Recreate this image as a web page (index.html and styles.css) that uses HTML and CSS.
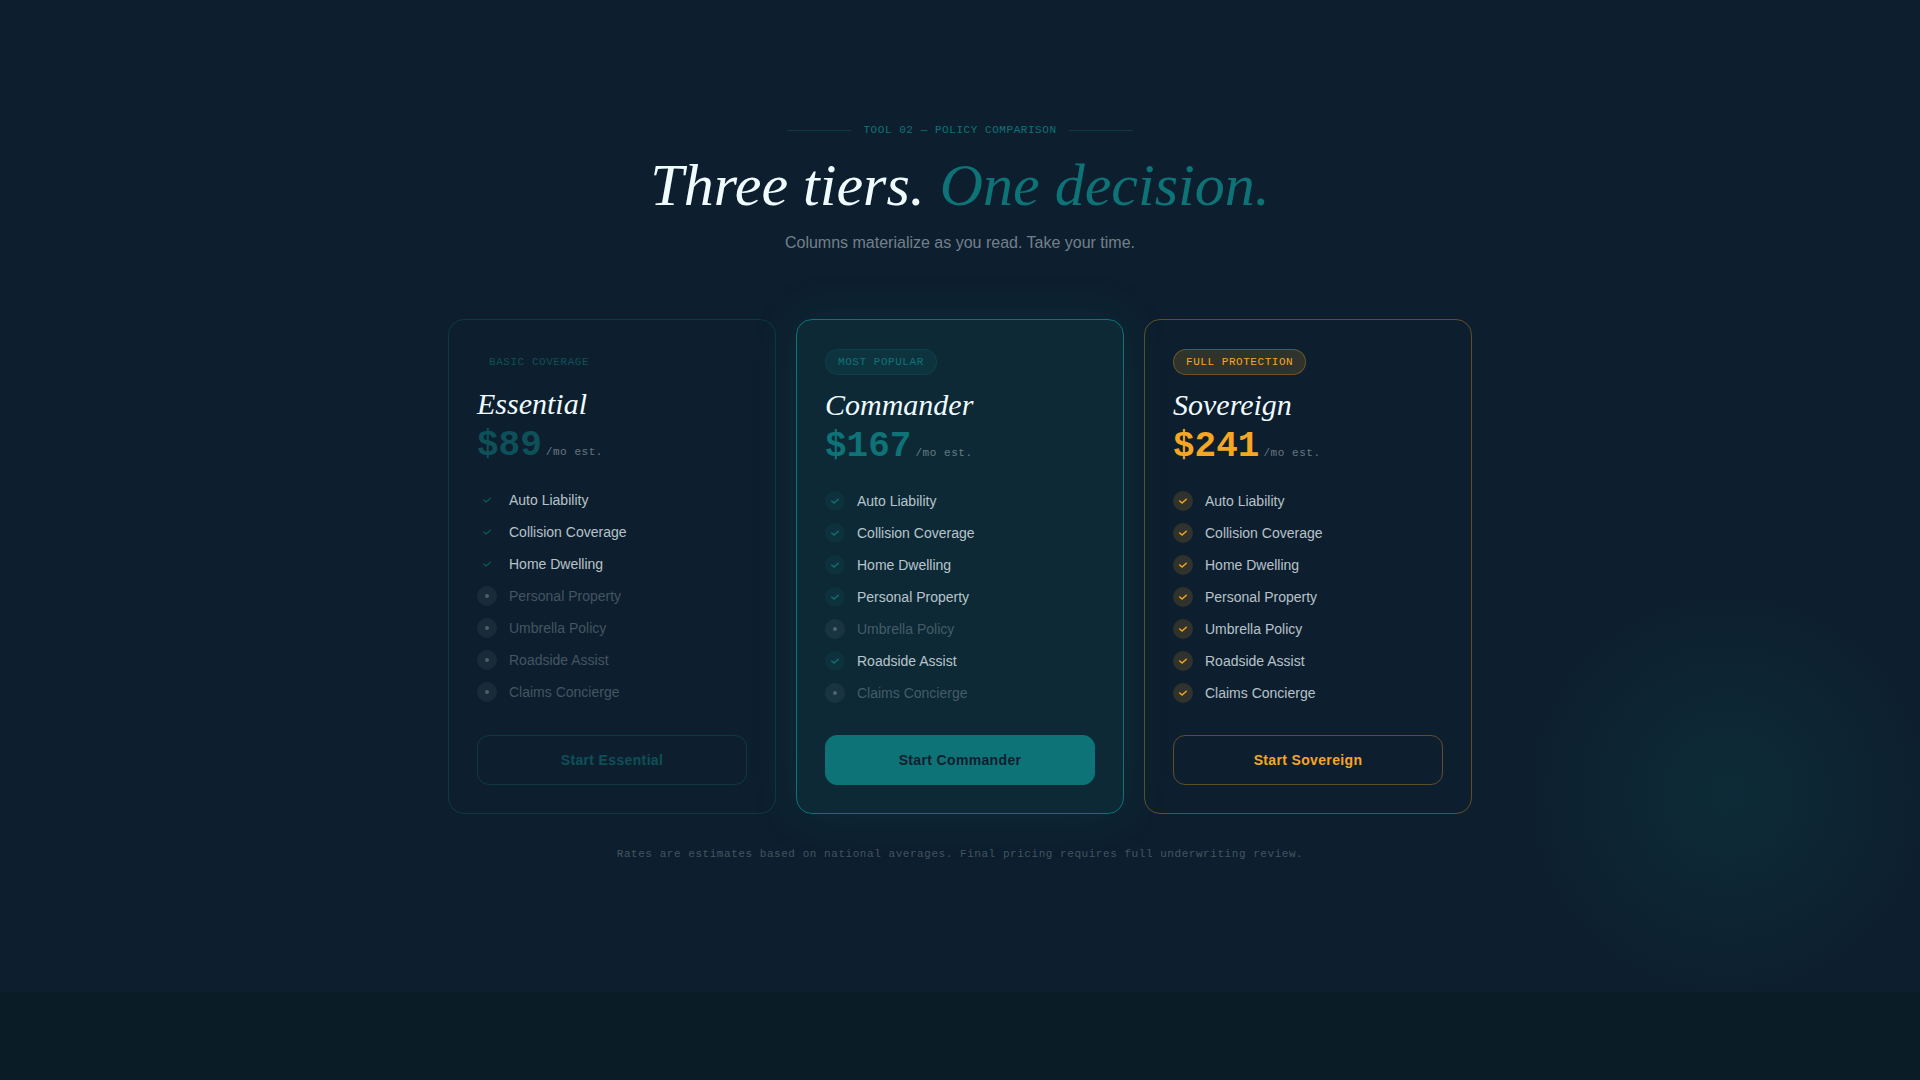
FILE: index.html
```html
<!DOCTYPE html>
<html lang="en">
<head>
    <meta charset="UTF-8">
    <meta name="viewport" content="width=device-width, initial-scale=1.0">
    <title>Policy Comparison</title>
    <link rel="stylesheet" href="styles.css">
</head>
<body>
    <!-- shared feature icons -->
    <svg class="sprite" aria-hidden="true">
        <symbol id="check" viewBox="0 0 10 10">
            <path d="M1.7 4.9l2.4 2.2 4.2-3.8" fill="none" stroke="currentColor" stroke-width="1.4" stroke-linecap="round" stroke-linejoin="round"/>
        </symbol>
        <symbol id="dot" viewBox="0 0 10 10">
            <circle cx="5" cy="5" r="2" fill="currentColor"/>
        </symbol>
    </svg>

    <section class="compare">
        <header class="compare-header">
            <div class="eyebrow">Tool 02 — Policy Comparison</div>
            <h2>Three tiers. <span>One decision.</span></h2>
            <p class="subtitle">Columns materialize as you read. Take your time.</p>
        </header>

        <div class="tiers">
            <article class="tier essential">
                <div class="badge">Basic Coverage</div>
                <h3>Essential</h3>
                <div class="price"><strong>$89</strong><span>/mo est.</span></div>
                <ul class="features">
                    <li><i><svg><use href="#check"/></svg></i>Auto Liability</li>
                    <li><i><svg><use href="#check"/></svg></i>Collision Coverage</li>
                    <li><i><svg><use href="#check"/></svg></i>Home Dwelling</li>
                    <li class="off"><i><svg><use href="#dot"/></svg></i>Personal Property</li>
                    <li class="off"><i><svg><use href="#dot"/></svg></i>Umbrella Policy</li>
                    <li class="off"><i><svg><use href="#dot"/></svg></i>Roadside Assist</li>
                    <li class="off"><i><svg><use href="#dot"/></svg></i>Claims Concierge</li>
                </ul>
                <button type="button" class="tier-btn">Start Essential</button>
            </article>

            <article class="tier commander">
                <div class="badge">Most Popular</div>
                <h3>Commander</h3>
                <div class="price"><strong>$167</strong><span>/mo est.</span></div>
                <ul class="features">
                    <li><i><svg><use href="#check"/></svg></i>Auto Liability</li>
                    <li><i><svg><use href="#check"/></svg></i>Collision Coverage</li>
                    <li><i><svg><use href="#check"/></svg></i>Home Dwelling</li>
                    <li><i><svg><use href="#check"/></svg></i>Personal Property</li>
                    <li class="off"><i><svg><use href="#dot"/></svg></i>Umbrella Policy</li>
                    <li><i><svg><use href="#check"/></svg></i>Roadside Assist</li>
                    <li class="off"><i><svg><use href="#dot"/></svg></i>Claims Concierge</li>
                </ul>
                <button type="button" class="tier-btn">Start Commander</button>
            </article>

            <article class="tier sovereign">
                <div class="badge">Full Protection</div>
                <h3>Sovereign</h3>
                <div class="price"><strong>$241</strong><span>/mo est.</span></div>
                <ul class="features">
                    <li><i><svg><use href="#check"/></svg></i>Auto Liability</li>
                    <li><i><svg><use href="#check"/></svg></i>Collision Coverage</li>
                    <li><i><svg><use href="#check"/></svg></i>Home Dwelling</li>
                    <li><i><svg><use href="#check"/></svg></i>Personal Property</li>
                    <li><i><svg><use href="#check"/></svg></i>Umbrella Policy</li>
                    <li><i><svg><use href="#check"/></svg></i>Roadside Assist</li>
                    <li><i><svg><use href="#check"/></svg></i>Claims Concierge</li>
                </ul>
                <button type="button" class="tier-btn">Start Sovereign</button>
            </article>
        </div>

        <p class="footnote">Rates are estimates based on national averages. Final pricing requires full underwriting review.</p>
    </section>
</body>
</html>
```
FILE: styles.css
```css
:root {
    --navy: #0d1f2e;
    --teal: #0d7377;
    --amber: #f5a623;
    --white: #f0fcff;
    --sans: "Liberation Sans", Arial, sans-serif;
    --serif: "Liberation Serif", "Times New Roman", serif;
    --mono: "Liberation Mono", "Courier New", monospace;
}

* {
    margin: 0;
    padding: 0;
    box-sizing: border-box;
}

body {
    background: #0a1d26;
    color: var(--white);
    font-family: var(--sans);
}

.sprite {
    display: none;
}

.compare {
    padding: 120px 24px 130px;
    background:
        radial-gradient(circle 210px at 90% 80%, rgba(13, 115, 119, 0.14), transparent),
        var(--navy);
}

/* Header */
.compare-header {
    text-align: center;
    margin-bottom: 64px;
}

.eyebrow {
    display: flex;
    justify-content: center;
    align-items: center;
    gap: 12px;
    margin-bottom: 15px;
    color: var(--teal);
    font-family: var(--mono);
    font-size: 11px;
    line-height: 20px;
    letter-spacing: 0.05em;
    text-transform: uppercase;
}

.eyebrow::before,
.eyebrow::after {
    content: "";
    width: 64px;
    height: 1px;
    background: var(--teal);
    opacity: 0.3;
}

h2 {
    margin-bottom: 16px;
    font-family: var(--serif);
    font-size: 60px;
    font-style: italic;
    font-weight: 400;
    line-height: 60px;
}

h2 span {
    color: var(--teal);
}

.subtitle {
    color: rgba(240, 250, 255, 0.45);
    font-size: 16px;
    line-height: 24px;
}

/* Tier cards */
.tiers {
    display: grid;
    grid-template-columns: repeat(3, 1fr);
    gap: 20px;
    max-width: 1024px;
    margin: 0 auto;
}

.tier {
    display: flex;
    flex-direction: column;
    align-items: flex-start;
    padding: 29px 28px 28px;
    border: 1px solid rgba(13, 115, 119, 0.3);
    border-radius: 16px;
}

.badge {
    margin-bottom: 12px;
    padding: 5px 12px 4px;
    border-radius: 100px;
    color: rgba(13, 115, 119, 0.6);
    font-family: var(--mono);
    font-size: 11px;
    line-height: 16px;
    letter-spacing: 0.05em;
    text-transform: uppercase;
}

h3 {
    margin-bottom: 4px;
    font-family: var(--serif);
    font-size: 30px;
    font-style: italic;
    font-weight: 400;
    line-height: 36px;
}

.price {
    display: flex;
    align-items: baseline;
    gap: 4px;
    margin-bottom: 24px;
    font-family: var(--mono);
}

.price strong {
    color: rgba(13, 115, 119, 0.6);
    font-size: 36px;
    line-height: 40px;
}

.price span {
    color: rgba(240, 250, 255, 0.4);
    font-size: 11px;
    letter-spacing: 0.05em;
}

.features {
    display: grid;
    gap: 12px;
    margin-bottom: 32px;
    list-style: none;
}

.features li {
    display: flex;
    align-items: center;
    gap: 12px;
    color: rgba(240, 250, 255, 0.75);
    font-size: 14px;
    line-height: 20px;
}

.features i {
    display: flex;
    justify-content: center;
    align-items: center;
    width: 20px;
    height: 20px;
    border-radius: 50%;
    color: rgba(13, 115, 119, 0.6);
}

.features svg {
    width: 10px;
    height: 10px;
}

.features .off {
    color: rgba(240, 250, 255, 0.25);
}

.features .off i {
    background: rgba(255, 255, 255, 0.05);
    color: rgba(240, 250, 255, 0.25);
}

.tier-btn {
    width: 100%;
    height: 50px;
    margin-top: auto;
    background: transparent;
    border: 1px solid rgba(13, 115, 119, 0.3);
    border-radius: 12px;
    color: rgba(13, 115, 119, 0.6);
    font-family: var(--sans);
    font-size: 14px;
    font-weight: 700;
    letter-spacing: 0.025em;
    cursor: pointer;
}

/* Commander */
.commander {
    background: rgba(13, 115, 119, 0.12);
    border-color: var(--teal);
    box-shadow: 0 0 48px rgba(13, 115, 119, 0.15);
}

.commander .badge {
    padding: 4px 12px;
    background: rgba(13, 115, 119, 0.15);
    border: 1px solid rgba(13, 115, 119, 0.2);
    color: var(--teal);
}

.commander .price strong {
    color: var(--teal);
}

.commander li:not(.off) i {
    background: rgba(13, 115, 119, 0.12);
    color: var(--teal);
}

.commander .tier-btn {
    background: var(--teal);
    border-color: var(--teal);
    color: var(--navy);
}

/* Sovereign */
.sovereign {
    border-color: rgba(245, 166, 35, 0.35);
}

.sovereign .badge {
    padding: 4px 12px;
    background: rgba(245, 166, 35, 0.15);
    border: 1px solid rgba(245, 166, 35, 0.3);
    color: var(--amber);
}

.sovereign .price strong {
    color: var(--amber);
}

.sovereign li i {
    background: rgba(245, 166, 35, 0.15);
    color: var(--amber);
}

.sovereign .tier-btn {
    border-color: rgba(245, 166, 35, 0.35);
    color: var(--amber);
}

.footnote {
    margin-top: 32px;
    color: rgba(240, 250, 255, 0.25);
    font-family: var(--mono);
    font-size: 11px;
    line-height: 16px;
    letter-spacing: 0.05em;
    text-align: center;
}
```
